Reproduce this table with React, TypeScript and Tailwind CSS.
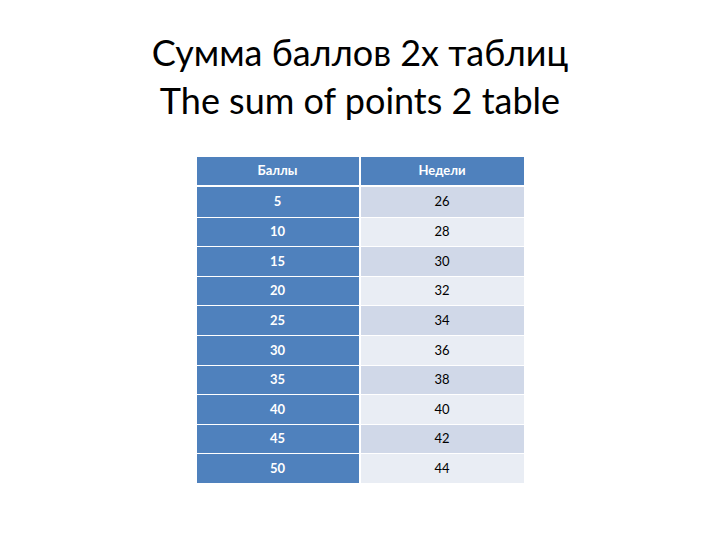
import React from 'react';

const rows: [number, number][] = [
  [5, 26],
  [10, 28],
  [15, 30],
  [20, 32],
  [25, 34],
  [30, 36],
  [35, 38],
  [40, 40],
  [45, 42],
  [50, 44],
];

const App: React.FC = () => {
  return (
    <div
      className="w-[720px] h-[540px] bg-white flex flex-col items-center pt-[28px]"
      style={{ fontFamily: 'Lato, "Liberation Sans", sans-serif' }}
    >
      <h1 className="text-[36px] leading-[48px] text-black text-center font-normal">
        Сумма баллов 2х таблиц
        <br />
        The sum of points 2 table
      </h1>

      <div className="mt-[33px] w-[327px] flex flex-col text-[13px]">
        <div className="flex h-[30px] border-b-[2px] border-white">
          <div className="w-[162px] bg-[#4f81bd] text-white font-bold flex items-center justify-center">
            Баллы
          </div>
          <div className="flex-1 ml-[2px] bg-[#4f81bd] text-white font-bold flex items-center justify-center">
            Недели
          </div>
        </div>
        {rows.map(([points, weeks], i) => (
          <div key={points} className={`flex h-[29.6px] ${i > 0 ? 'border-t border-white' : ''}`}>
            <div className="w-[162px] bg-[#4f81bd] text-white font-bold flex items-center justify-center">
              {points}
            </div>
            <div
              className={`flex-1 ml-[2px] text-black flex items-center justify-center ${
                i % 2 === 0 ? 'bg-[#d0d8e8]' : 'bg-[#e9edf4]'
              }`}
            >
              {weeks}
            </div>
          </div>
        ))}
      </div>
    </div>
  );
};

export default App;
